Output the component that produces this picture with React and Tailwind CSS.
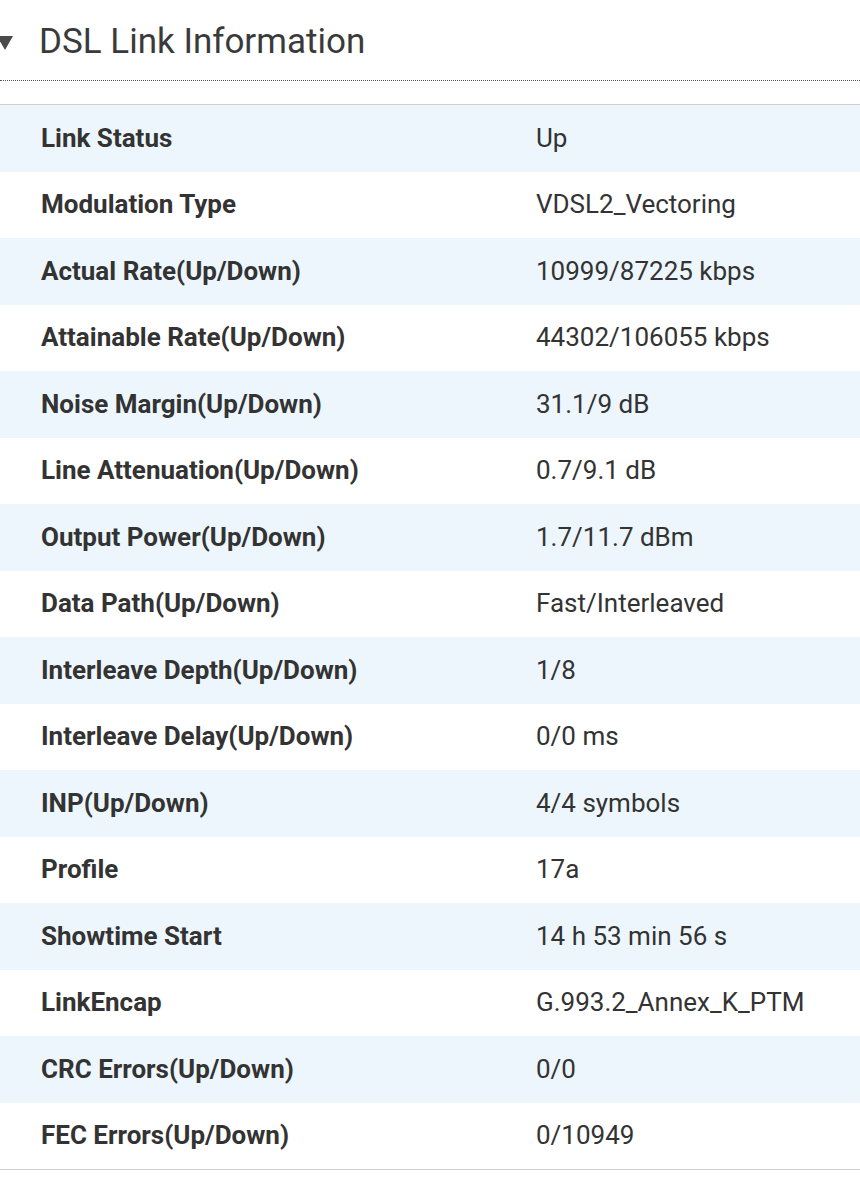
const rows = [
  ['Link Status', 'Up'],
  ['Modulation Type', 'VDSL2_Vectoring'],
  ['Actual Rate(Up/Down)', '10999/87225 kbps'],
  ['Attainable Rate(Up/Down)', '44302/106055 kbps'],
  ['Noise Margin(Up/Down)', '31.1/9 dB'],
  ['Line Attenuation(Up/Down)', '0.7/9.1 dB'],
  ['Output Power(Up/Down)', '1.7/11.7 dBm'],
  ['Data Path(Up/Down)', 'Fast/Interleaved'],
  ['Interleave Depth(Up/Down)', '1/8'],
  ['Interleave Delay(Up/Down)', '0/0 ms'],
  ['INP(Up/Down)', '4/4 symbols'],
  ['Profile', '17a'],
  ['Showtime Start', '14 h 53 min 56 s'],
  ['LinkEncap', 'G.993.2_Annex_K_PTM'],
  ['CRC Errors(Up/Down)', '0/0'],
  ['FEC Errors(Up/Down)', '0/10949'],
];

export default function App() {
  return (
    <div className="w-[860px] h-[1200px] bg-white overflow-hidden font-['Roboto',sans-serif] text-[#333]">
      {/* section header */}
      <div className="h-[81px] flex items-center border-b border-dotted border-[#555]">
        <svg width="16" height="14" viewBox="0 0 16 14" className="ml-[-3px] mt-[6px] shrink-0">
          <polygon points="0,0 16,0 8,14" fill="#4a4a4a" />
        </svg>
        <h2 className="ml-[26px] mt-[3px] text-[35px] font-normal text-[#3a3a3a] leading-none">DSL Link Information</h2>
      </div>

      <div className="mt-[23px] border-t border-b border-[#cfcfcf]">
        {rows.map(([label, value], i) => (
          <div
            key={label}
            className={`h-[66.5px] flex items-center ${i % 2 === 0 ? 'bg-[#eef6fd]' : 'bg-white'}`}
          >
            <div className="w-[536px] pl-[41px] text-[26px] font-bold">{label}</div>
            <div className="text-[26px]">{value}</div>
          </div>
        ))}
      </div>
    </div>
  );
}
